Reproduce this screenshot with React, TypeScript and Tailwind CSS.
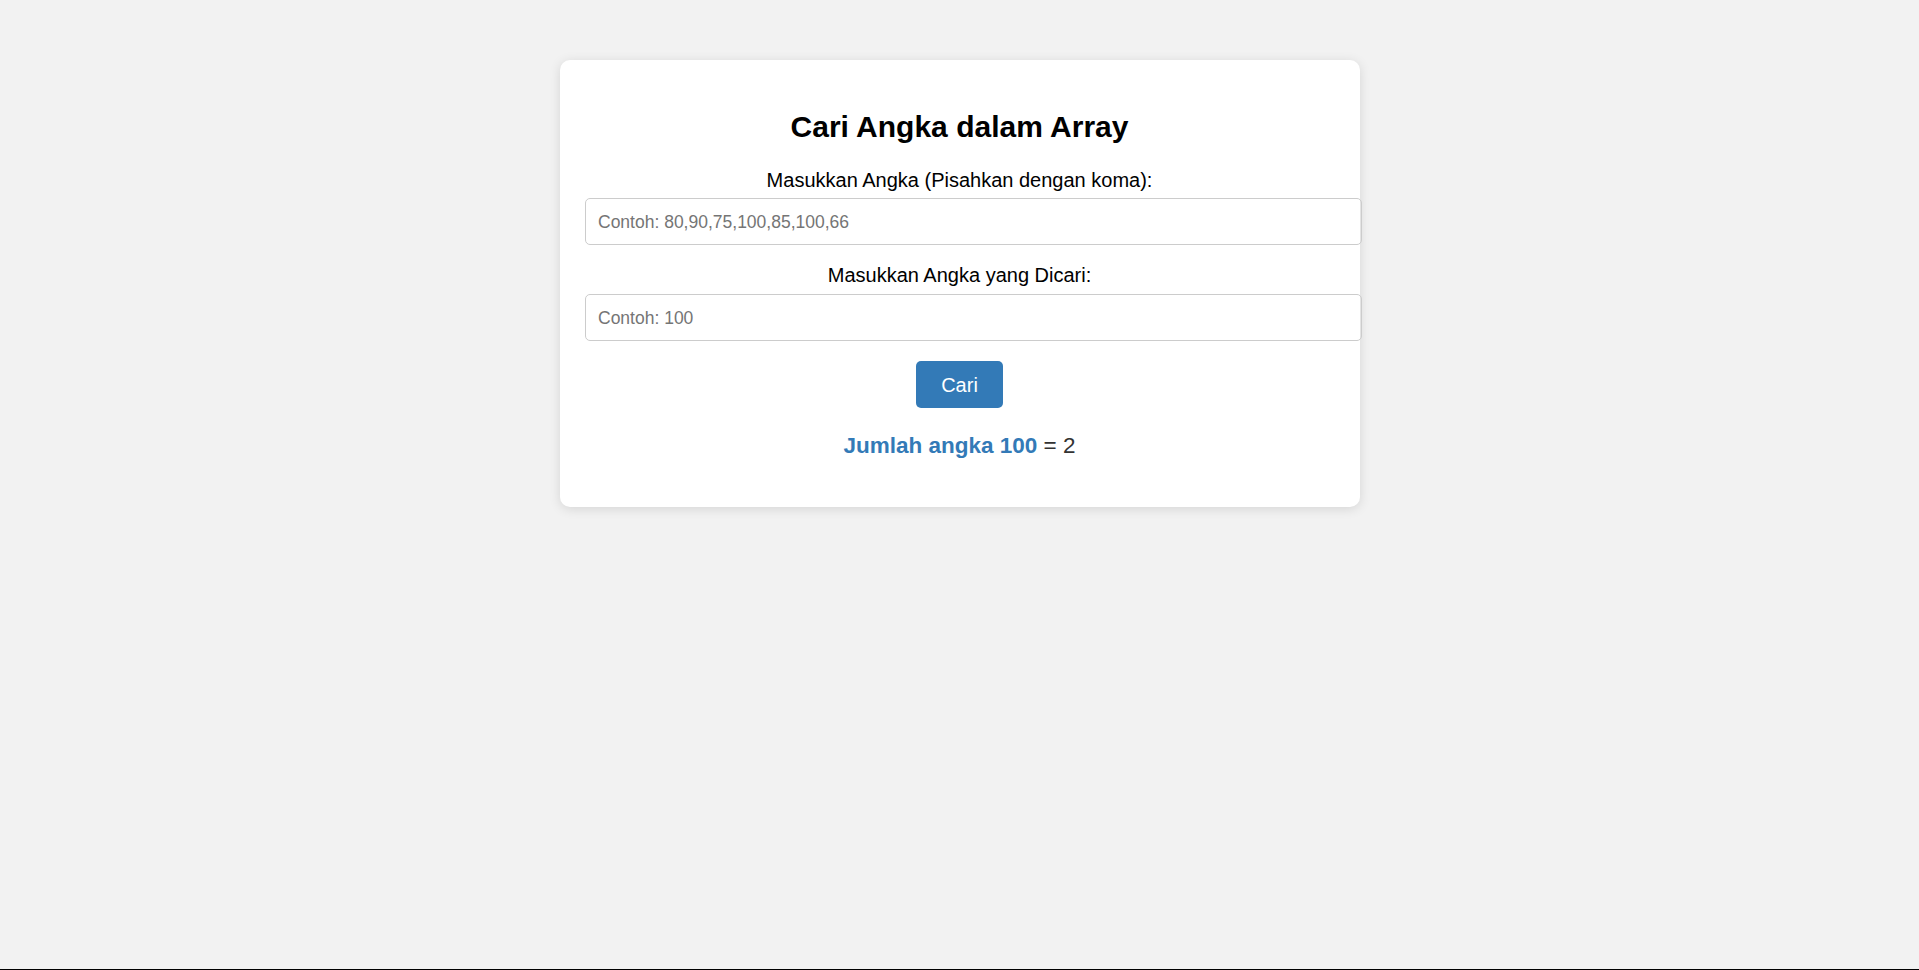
export default function App() {
  return (
    <div className="h-[970px] bg-[#f2f2f2] pt-[60px] border-b border-black font-['Liberation_Sans',Arial,sans-serif] text-black">
      <div className="mx-auto w-[800px] rounded-[10px] bg-white p-[25px] text-center shadow-[0_2px_12px_rgba(0,0,0,0.12)]">
        <h2 className="mt-[25px] text-[30px] leading-[34px] font-bold">Cari Angka dalam Array</h2>

        <label className="mt-[24.5px] block text-[20px] leading-[23px]">
          Masukkan Angka (Pisahkan dengan koma):
        </label>
        <input
          type="text"
          placeholder="Contoh: 80,90,75,100,85,100,66"
          className="mt-[6.5px] box-content block w-full rounded-[5px] border border-[#cccccc] px-[12.5px] py-[12.5px] text-left text-[17.5px] leading-[20px] placeholder:text-[#757575] outline-none"
        />

        <label className="mt-[19px] block text-[20px] leading-[23px]">Masukkan Angka yang Dicari:</label>
        <input
          type="text"
          placeholder="Contoh: 100"
          className="mt-[7px] box-content block w-full rounded-[5px] border border-[#cccccc] px-[12.5px] py-[12.5px] text-left text-[17.5px] leading-[20px] placeholder:text-[#757575] outline-none"
        />

        <button className="mt-[20px] rounded-[5px] bg-[#337ab7] px-[25px] py-[12.5px] text-[20px] leading-[22px] text-white">
          Cari
        </button>

        <p className="mt-[24.5px] mb-[23.5px] text-[22.5px] leading-[26px] text-[#333333]">
          <span className="font-bold text-[#337ab7]">Jumlah angka 100</span> = 2
        </p>
      </div>
    </div>
  );
}
